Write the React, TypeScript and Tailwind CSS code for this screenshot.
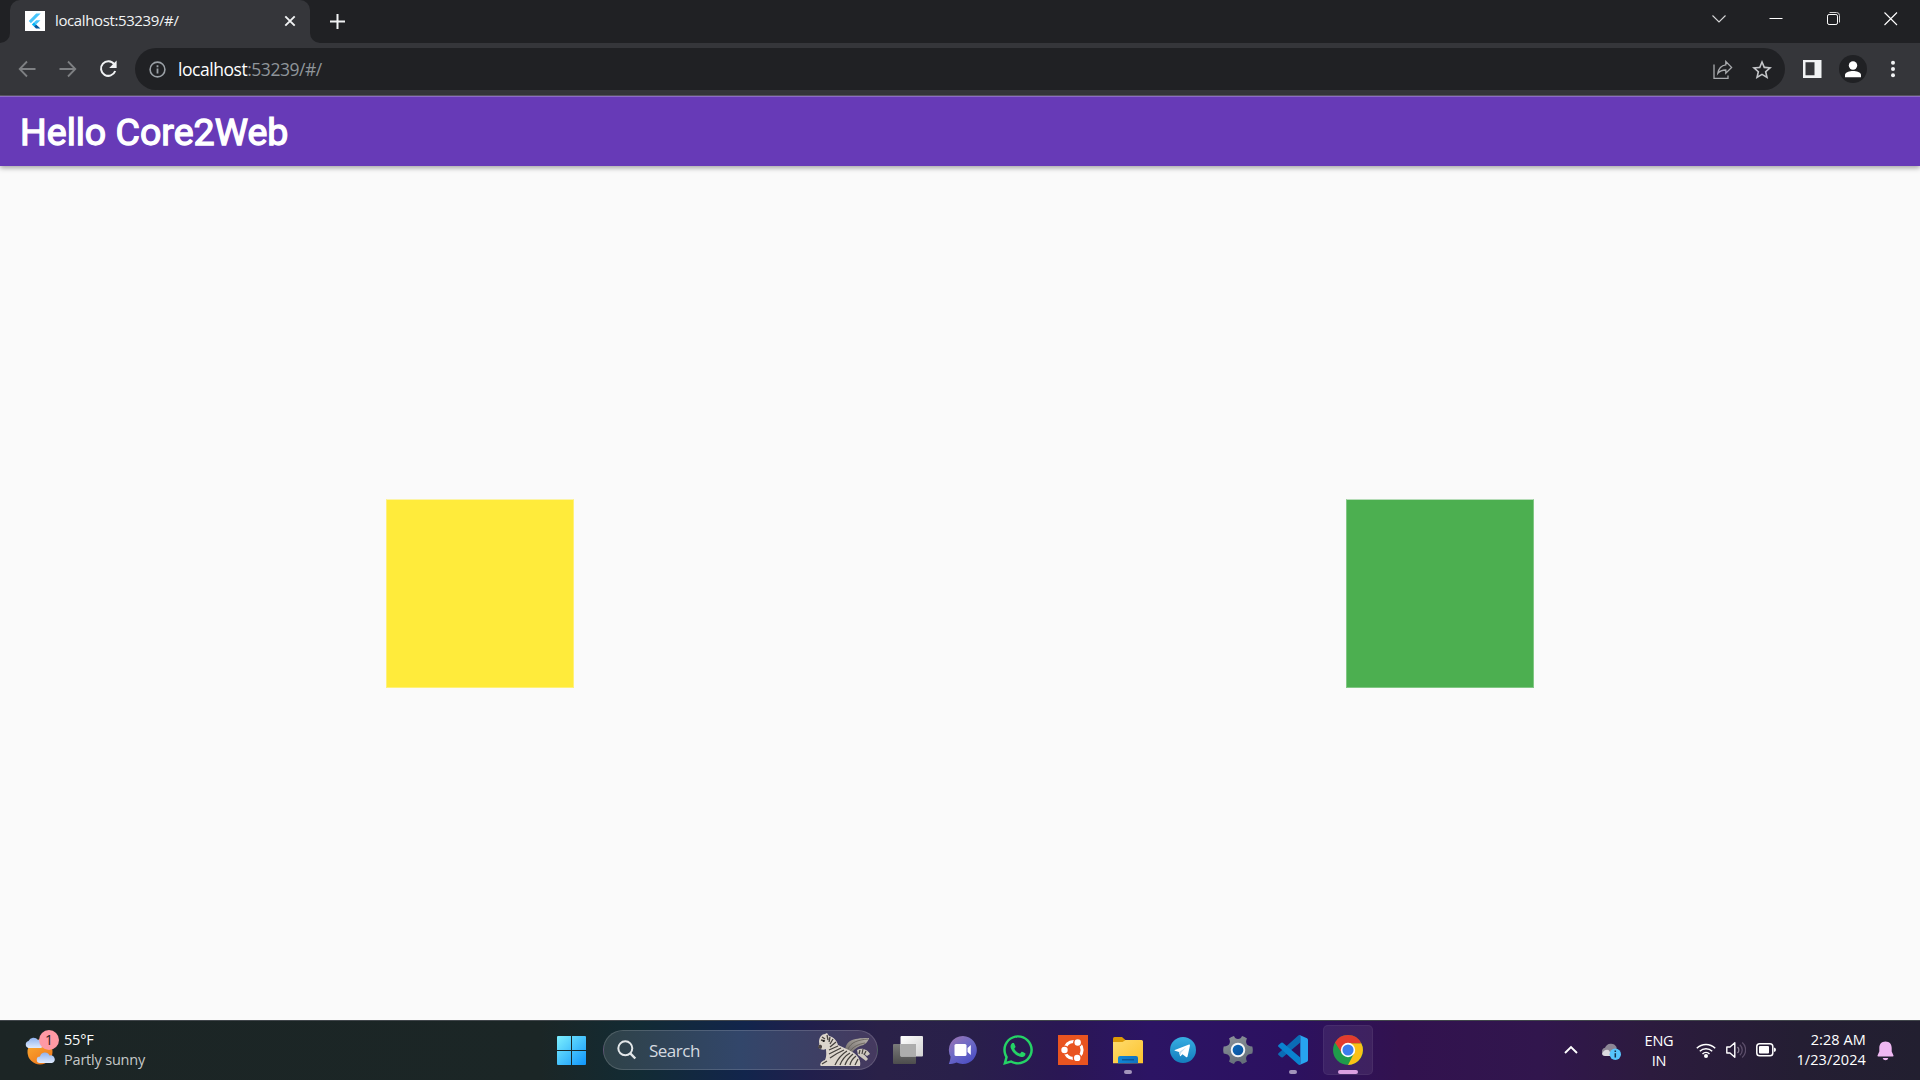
import React from "react";
import { FaWhatsapp } from "react-icons/fa";

const ui = "font-['Open_Sans','Noto_Sans',sans-serif]";

function Svg({ w, h, box, className = "", children }: { w: number; h: number; box?: string; className?: string; children: React.ReactNode }) {
  return (
    <svg width={w} height={h} viewBox={box ?? `0 0 ${w} ${h}`} fill="none" className={`shrink-0 ${className}`}>
      {children}
    </svg>
  );
}

function TabStrip() {
  return (
    <div className="flex h-[43px] items-start bg-[#202124] pl-[10px]">
      <div className="relative flex h-[43px] w-[300px] items-center rounded-t-[10px] bg-[#35363a] pl-[15px]">
        <Svg w={10} h={10} className="absolute bottom-0 -left-[10px]">
          <path d="M10 0V10H0A10 10 0 0 0 10 0Z" fill="#35363a" />
        </Svg>
        <Svg w={10} h={10} className="absolute -right-[10px] bottom-0">
          <path d="M0 0V10H10A10 10 0 0 1 0 0Z" fill="#35363a" />
        </Svg>
        <Svg w={20} h={20} className="-mt-px">
          <path d="M0 0H20V20H0Z" fill="#fff" />
          <path d="M11.2 2.5H15.6L5.9 12.2L3.8 10Z" fill="#47c5fb" />
          <path d="M11.2 9.2H15.4L11.1 13.4L9 11.3Z" fill="#47c5fb" />
          <path d="M6.8 13.4L9 11.2L11.1 13.4L9 15.6Z" fill="#00b5f8" />
          <path d="M9 15.6L11.1 13.4L15.4 17.4H11Z" fill="#00569e" />
        </Svg>
        <span className={`${ui} mb-[3px] ml-[10px] w-[229px] text-[15px] leading-5 tracking-[-0.38px] whitespace-nowrap text-[#f1f3f4]`}>localhost:53239/#/</span>
        <Svg w={12} h={12} className="mb-px">
          <path d="M1.3 1.3L10.7 10.7M10.7 1.3L1.3 10.7" stroke="#f1f3f4" strokeWidth="1.9" />
        </Svg>
      </div>
      <Svg w={16} h={16} className="mt-[13px] ml-[19px]">
        <path d="M8.5 1V16M1 8.5H16" stroke="#f1f3f4" strokeWidth="2" />
      </Svg>
      <div className="mt-[11px] ml-auto flex items-center pr-[21px]">
        <Svg w={16} h={16} className="mr-[41px]">
          <path d="M1.5 4.5L8 11L14.5 4.5" stroke="#d6d7d8" strokeWidth="1.1" />
        </Svg>
        <Svg w={16} h={16} className="mr-[41px]">
          <path d="M1.5 7.5H14.5" stroke="#fff" />
        </Svg>
        <Svg w={16} h={16} className="mr-[42px]">
          <rect x="2.5" y="3.5" width="10" height="10" rx="1.6" stroke="#fff" />
          <path d="M4.5 1.5H11.5Q14.5 1.5 14.5 4.5V11.5" stroke="#d0d0d0" />
        </Svg>
        <Svg w={16} h={16}>
          <path d="M1.5 1.5L14 14M14 1.5L1.5 14" stroke="#fff" strokeWidth="1.1" />
        </Svg>
      </div>
    </div>
  );
}

function Toolbar() {
  return (
    <div className="flex h-[53px] items-center border-b border-[#5d5a66] bg-[#35363a] pl-[18px]">
      <Svg w={18} h={18}>
        <path d="M17.5 9H2M9 1.5L1.7 9L9 16.5" stroke="#7e8083" strokeWidth="1.8" />
      </Svg>
      <Svg w={18} h={18} className="ml-[23px]">
        <path d="M0.5 9H16M9 1.5L16.3 9L9 16.5" stroke="#7e8083" strokeWidth="1.8" />
      </Svg>
      <Svg w={18} h={18} className="ml-[22px]">
        <path d="M15.2 4.2A7.3 7.3 0 1 0 16.2 11" stroke="#f1f3f4" strokeWidth="2" />
        <path d="M17.6 0.5V8H10.2Z" fill="#f1f3f4" />
      </Svg>
      <div className="ml-[18px] flex h-[42px] w-[1650px] items-center rounded-full bg-[#202124] pl-[14px]">
        <Svg w={17} h={17}>
          <circle cx="8.5" cy="8.5" r="7.4" stroke="#9aa0a6" strokeWidth="1.6" />
          <path d="M8.5 7.6V12.6M8.5 4.3V6.2" stroke="#9aa0a6" strokeWidth="1.8" />
        </Svg>
        <span className={`${ui} ml-[12px] text-[17.5px] leading-6 tracking-[-0.46px] whitespace-nowrap text-[#8f959a]`}>
          <span className="text-white">localhost</span>:53239/#/
        </span>
        <Svg w={20} h={20} className="mt-px ml-auto">
          <path d="M1 4.5V18.4H15V15.5" stroke="#a9abae" strokeWidth="1.3" />
          <path d="M12.8 1.5L18.6 7.4L12.8 13.2V10C9 10 6.6 11.2 4.8 13.4C5.4 9.4 7.8 5.4 12.8 4.8Z" stroke="#a9abae" strokeWidth="1.3" />
        </Svg>
        <Svg w={20} h={20} box="2 2 20 20" className="mt-px mr-[13px] ml-[19px]">
          <path d="M22 9.24l-7.19-.62L12 2 9.19 8.63 2 9.24l5.46 4.73L5.82 21 12 17.27 18.18 21l-1.63-7.03L22 9.24zM12 15.4l-3.76 2.27 1-4.28-3.32-2.88 4.38-.38L12 6.1l1.71 4.04 4.38.38-3.32 2.88 1 4.28L12 15.4z" fill="#c4c6c9" />
        </Svg>
      </div>
      <Svg w={19} h={18} className="ml-[18px]">
        <path fillRule="evenodd" d="M0 0H18.5V18H0ZM2.5 2.3V15.2H11.5V2.3Z" fill="#f1f3f4" />
      </Svg>
      <div className="ml-[17px] flex size-7 items-center justify-center rounded-full bg-[#202124]">
        <Svg w={16} h={17}>
          <circle cx="8" cy="4.5" r="4.2" fill="#fff" />
          <path d="M0 16.3V14C0 11.2 4.6 10 8 10S16 11.2 16 14V16.3Z" fill="#fff" />
        </Svg>
      </div>
      <Svg w={6} h={18} className="ml-[22.5px]">
        <circle cx="3" cy="2.7" r="2" fill="#f1f3f4" />
        <circle cx="3" cy="9" r="2" fill="#f1f3f4" />
        <circle cx="3" cy="15.3" r="2" fill="#f1f3f4" />
      </Svg>
    </div>
  );
}

function Page() {
  return (
    <main className="flex flex-1 flex-col bg-[#fafafa]">
      <header className="z-10 flex h-[70px] items-center border-t border-[#8c6cc4] bg-[#673ab7] pl-5 shadow-[0_2px_5px_rgba(0,0,0,0.35)]">
        <h1 className="pt-[2px] font-['Roboto',sans-serif] text-[37.5px] leading-none font-normal whitespace-nowrap text-white [-webkit-text-stroke:1.3px_white]">Hello Core2Web</h1>
      </header>
      <section className="grid flex-1 grid-cols-2 place-items-center pt-px">
        <div className="h-[189px] w-[188px] border border-[#fff17a] border-t-[#fcf4a6] bg-[#ffeb3b]" />
        <div className="h-[189px] w-[188px] border border-[#81c784] border-t-[#b5dcb7] bg-[#4caf50]" />
      </section>
    </main>
  );
}

function Weather() {
  return (
    <div className="flex w-[557px] items-center pl-[24px]">
      <div className="relative mb-[3px] h-[36px] w-[36px]">
        <Svg w={36} h={36}>
          <defs>
            <linearGradient id="sun" x1="0" y1="0" x2="0.6" y2="1">
              <stop stopColor="#fbb034" />
              <stop offset="1" stopColor="#f07a1c" />
            </linearGradient>
            <linearGradient id="cloud" x1="0" y1="0" x2="0" y2="1">
              <stop stopColor="#8fb2ee" />
              <stop offset="1" stopColor="#dfeafd" />
            </linearGradient>
          </defs>
          <circle cx="16" cy="21" r="12.5" fill="url(#sun)" />
          <path d="M4.5 17A3.6 3.6 0 0 1 4.5 10A5.5 5.5 0 0 1 14 9A4.2 4.2 0 0 1 17 17Z" fill="url(#cloud)" />
          <path d="M16 32A3.2 3.2 0 0 1 16 25.5A5 5 0 0 1 25.5 24.5A3.8 3.8 0 0 1 28 32Z" fill="url(#cloud)" />
        </Svg>
        <span className={`${ui} absolute -top-px left-[15px] flex size-[20px] items-center justify-center rounded-full bg-[#ff99a4] text-[14px] leading-none text-[#2b1a1c]`}>1</span>
      </div>
      <div className={`${ui} ml-[4px] text-[14.5px] leading-[20px] whitespace-nowrap`}>
        <div className="tracking-[-0.2px] text-white">55°F</div>
        <div className="tracking-[-0.2px] text-[#c6c9c9]">Partly sunny</div>
      </div>
    </div>
  );
}

function Zebra() {
  return (
    <Svg w={56} h={34}>
      <defs>
        <linearGradient id="wing" x1="0" y1="1" x2="1" y2="0">
          <stop stopColor="#6f6a69" />
          <stop offset="1" stopColor="#b9b3ab" />
        </linearGradient>
      </defs>
      <path d="M28 18C29 8 34 5 52 5C51 9 48 12 43 13C39 15 36 17 35 20Z" fill="url(#wing)" />
      <path d="M31 16C34 9 41 7 51 6M33 18C37 13 42 11 48 10" stroke="#5f5a56" strokeWidth="0.8" />
      <path d="M40 17C45 14 51 17 53 21L50 23L46 20L51 26L49 28L41 22Z" fill="#cfc8bf" />
      <path d="M43 17L42 21M46 16L45 21M49 18L47 22" stroke="#46423f" strokeWidth="1.2" />
      <path d="M2 9C2 4 5 1 8 1L10 0L12 3C17 4 20 8 21 12C26 14 32 17 37 20C42 24 44 28 43 33H4C2 32 4 28 8 27C10 23 9 19 9 16C7 17 4 17 2 15C1 13 3 11 2 9Z" fill="#dcd5cc" />
      <path d="M2 12C5 11 6 14 4 16L1 15Z" fill="#4c4441" />
      <path d="M5 4L8 6M4 7L8 8M10 2L11 7M13 4L12 9M16 6L13 11M19 9L13 14M21 13L12 17M24 15L12 21M27 17Q20 20 13 25M10 28L5 31M30 18Q22 23 18 32M33 20Q26 24 23 32M36 21Q30 26 28 32M39 23Q34 27 33 32M41 26L38 32" stroke="#46423f" strokeWidth="1.3" />
      <circle cx="6.5" cy="8" r="0.9" fill="#1c1a19" />
    </Svg>
  );
}

function SearchBox() {
  return (
    <div className="ml-[17px] flex h-10 w-[275px] items-center rounded-full border border-white/15 bg-linear-to-r from-[#2f4248] via-[#32466a] to-[#45395f] pl-[13px]">
      <Svg w={20} h={20}>
        <circle cx="8.3" cy="8.3" r="7" stroke="#e3e7e9" strokeWidth="2" />
        <path d="M13.3 13.3L18.3 18.5" stroke="#e3e7e9" strokeWidth="2.4" />
      </Svg>
      <span className={`${ui} mt-[2px] ml-[12px] text-[17px] leading-6 tracking-[-0.5px] text-[#d5dae0]`}>Search</span>
      <div className="mr-[4px] ml-auto">
        <Zebra />
      </div>
    </div>
  );
}

function TaskSlot({ children, mark, active }: { children: React.ReactNode; mark?: boolean; active?: boolean }) {
  return (
    <div className={`relative flex h-[50px] w-[50px] shrink-0 items-center justify-center rounded-[5px] ${active ? "border border-white/5 bg-white/7" : ""}`}>
      {children}
      {mark && <span className="absolute bottom-px left-[21px] h-1 w-2 rounded-full bg-[#a394bb]" />}
      {active && <span className="absolute bottom-0 left-[14px] h-1 w-5 rounded-full bg-[#dc9fe2]" />}
    </div>
  );
}

function Apps() {
  return (
    <div className="ml-[5px] flex items-center gap-[5px]">
      <TaskSlot>
        <Svg w={30} h={30}>
          <defs>
            <linearGradient id="tv" x1="0" y1="0" x2="1" y2="1">
              <stop stopColor="#ffffff" />
              <stop offset="1" stopColor="#d2d2d2" />
            </linearGradient>
            <linearGradient id="tvb" x1="0" y1="0" x2="0" y2="1">
              <stop stopColor="#7a7a7a" />
              <stop offset="1" stopColor="#4d4d4d" />
            </linearGradient>
          </defs>
          <rect x="0" y="9" width="23" height="20" rx="1" fill="url(#tvb)" />
          <rect x="7.5" y="1" width="22.5" height="20.5" rx="1" fill="url(#tv)" />
          <rect x="7.5" y="9" width="15.5" height="12.5" fill="#adadad" />
        </Svg>
      </TaskSlot>
      <TaskSlot>
        <Svg w={30} h={30}>
          <defs>
            <linearGradient id="chat" x1="0" y1="0" x2="0.7" y2="1">
              <stop stopColor="#a175b0" />
              <stop offset="0.5" stopColor="#6f6bc6" />
              <stop offset="1" stopColor="#4d4fc4" />
            </linearGradient>
          </defs>
          <path d="M15 1A14 14 0 1 1 8.5 27.5C6 28.6 3 29 0.8 29C2 26.5 2.3 24 2.6 21.8A14 14 0 0 1 15 1Z" fill="url(#chat)" />
          <rect x="6.5" y="9" width="12" height="12" rx="1.5" fill="#fff" />
          <path d="M19.5 13L22.8 10V20L19.5 17Z" fill="#fff" />
        </Svg>
      </TaskSlot>
      <TaskSlot>
        <FaWhatsapp size={34} color="#25d366" />
      </TaskSlot>
      <TaskSlot>
        <Svg w={30} h={30}>
          <path d="M0 0H30V30H0Z" fill="#e95420" />
          <circle cx="15.5" cy="15" r="8.6" stroke="#fff" strokeWidth="3" />
          <circle cx="6.5" cy="15" r="4.6" fill="#e95420" />
          <circle cx="19.7" cy="7.5" r="4.6" fill="#e95420" />
          <circle cx="19.2" cy="22.9" r="4.6" fill="#e95420" />
          <circle cx="6.5" cy="15" r="3.2" fill="#fff" />
          <circle cx="19.7" cy="7.5" r="3.2" fill="#fff" />
          <circle cx="19.2" cy="22.9" r="3.2" fill="#fff" />
        </Svg>
      </TaskSlot>
      <TaskSlot mark>
        <Svg w={30} h={30}>
          <defs>
            <linearGradient id="fold" x1="0" y1="0" x2="1" y2="1">
              <stop stopColor="#ffdb6e" />
              <stop offset="1" stopColor="#fcc32c" />
            </linearGradient>
            <linearGradient id="foldb" x1="0" y1="0" x2="1" y2="0">
              <stop stopColor="#0f87d6" />
              <stop offset="1" stopColor="#1272c0" />
            </linearGradient>
          </defs>
          <path d="M0 3.5Q0 2 1.5 2H9L13 5.5V9H0Z" fill="#dd9a07" />
          <path d="M0 7H9.5L12.5 5H28.5Q30 5 30 6.5V28.3H0Z" fill="url(#fold)" />
          <path d="M5 28.3V23Q5 21 7 21H23Q25 21 25 23V28.3Z" fill="url(#foldb)" />
          <path d="M9 24.8H21" stroke="#0b4f8c" strokeWidth="1.2" />
        </Svg>
      </TaskSlot>
      <TaskSlot>
        <Svg w={26} h={26}>
          <defs>
            <linearGradient id="tg" x1="0" y1="0" x2="0" y2="1">
              <stop stopColor="#37aee2" />
              <stop offset="1" stopColor="#147dbd" />
            </linearGradient>
          </defs>
          <circle cx="13" cy="13" r="13" fill="url(#tg)" />
          <path d="M4.8 12.9L19 7.5Q20.2 7.2 19.9 8.7L17.6 19.3Q17.2 20.6 16 19.9L12.5 17.3L10.7 19Q10 19.6 9.9 18.5L9 14.9L5 13.7Q4 13.3 4.8 12.9Z" fill="#fff" />
          <path d="M9 14.9L16.3 10.2L11.3 15.5L10.5 18.5Z" fill="#c4dff0" />
        </Svg>
      </TaskSlot>
      <TaskSlot>
        <Svg w={30} h={30}>
          <defs>
            <linearGradient id="gear" x1="0" y1="0" x2="0.4" y2="1">
              <stop stopColor="#8f959c" />
              <stop offset="1" stopColor="#66707a" />
            </linearGradient>
            <linearGradient id="hub" x1="0" y1="0" x2="1" y2="1">
              <stop stopColor="#0f6cbd" />
              <stop offset="1" stopColor="#0a4f9a" />
            </linearGradient>
          </defs>
          <path
            d="M6 3.5Q8.3 1.7 11 1Q12 4 15 4T19 1Q21.7 1.7 24 3.5Q22.5 6 23.5 8.5T29.3 11.5Q30.3 15 29.3 18.5Q24.5 19 23.5 21.5T24 26.5Q21.7 28.3 19 29Q18 26 15 26T11 29Q8.3 28.3 6 26.5Q7.5 24 6.5 21.5T0.7 18.5Q-0.3 15 0.7 11.5Q5.5 11 6.5 8.5T6 3.5Z"
            fill="url(#gear)"
          />
          <circle cx="15" cy="15" r="6.3" fill="url(#hub)" stroke="#f3f5f7" strokeWidth="1.9" />
        </Svg>
      </TaskSlot>
      <TaskSlot mark>
        <Svg w={30} h={30}>
          <path d="M22 7.8L4.8 22.2Q3.8 22.9 2.9 22.1L0.5 20Q-0.4 19.1 0.5 18.2L20.3 0.5Q21.2 -0.1 22 0.2Z" fill="#0b6cb5" />
          <path d="M22 22.2L4.8 7.8Q3.8 7.1 2.9 7.9L0.5 10Q-0.4 10.9 0.5 11.8L20.3 29.5Q21.2 30.1 22 29.8Z" fill="#0a82cf" />
          <path d="M21.5 0L29 3.3Q30 3.8 30 5V25Q30 26.2 29 26.7L21.5 30Q22.3 29.5 22.3 28V2Q22.3 0.6 21.5 0Z" fill="#27a4f0" />
        </Svg>
      </TaskSlot>
      <TaskSlot active>
        <Svg w={30} h={30} box="0 0 48 48">
          <circle cx="24" cy="24" r="24" fill="#1f9b4b" />
          <path d="M24 13H45.2A24 24 0 0 1 24 48L33.5 29.5Z" fill="#fbc116" />
          <path d="M24 13L14.5 29.5L3.2 12A24 24 0 0 1 45.2 13Z" fill="#e33b2e" />
          <circle cx="24" cy="24" r="11.5" fill="#fff" />
          <circle cx="24" cy="24" r="8.9" fill="#3b7ded" />
        </Svg>
      </TaskSlot>
    </div>
  );
}

function Tray() {
  return (
    <div className={`${ui} ml-auto flex items-center pr-[26px] text-[14.5px] leading-[20px] text-white`}>
      <Svg w={14} h={10} className="mr-[23px]">
        <path d="M1 8L7 2L13 8" stroke="#fff" strokeWidth="1.9" />
      </Svg>
      <Svg w={20} h={18} className="mt-[2px]">
        <path d="M4.5 14A4.2 4.2 0 0 1 4 5.8A6.3 6.3 0 0 1 15.5 5L16 14Z" fill="#8c8694" />
        <path d="M1 12Q3 7 7.5 8L12 14H4Q1.5 14 1 12Z" fill="#dcdadf" />
        <circle cx="14.3" cy="12.2" r="5.7" fill="#56c5fb" />
        <path d="M14.3 11.2V15.5M14.3 8.5V10" stroke="#17324a" strokeWidth="1.5" />
      </Svg>
      <div className="mt-[2px] ml-[20px] w-[36px] text-center tracking-[-0.2px]">
        <div>ENG</div>
        <div>IN</div>
      </div>
      <Svg w={20} h={17} className="ml-[19px]">
        <path d="M0.8 6.3A13 13 0 0 1 19.2 6.3M3.8 9.3A8.7 8.7 0 0 1 16.2 9.3M6.5 12A5 5 0 0 1 13.5 12" stroke="#fff" strokeWidth="1.5" />
        <circle cx="10" cy="14" r="2" fill="#fff" />
      </Svg>
      <Svg w={20} h={18} className="ml-[10px]">
        <path d="M0.8 6H4L8.8 1.8V16.2L4 12H0.8Z" stroke="#fff" strokeWidth="1.4" strokeLinejoin="round" />
        <path d="M11.5 6A4 4 0 0 1 11.5 12" stroke="#8a7f93" strokeWidth="1.3" />
        <path d="M13.8 3.7A7 7 0 0 1 13.8 14.3M16.2 1.5A10 10 0 0 1 16.2 16.5" stroke="#5d4f6b" strokeWidth="1.3" />
      </Svg>
      <Svg w={20} h={14} className="ml-[10px]">
        <rect x="0.8" y="0.8" width="16" height="12" rx="2.8" stroke="#fff" strokeWidth="1.5" />
        <rect x="3" y="3" width="10" height="7.6" rx="1" fill="#fff" />
        <path d="M18 4.5Q20 4.8 20 6.8T18 9Z" fill="#fff" />
      </Svg>
      <div className="ml-[16px] w-[74px] text-right tracking-[0.1px] whitespace-nowrap">
        <div>2:28 AM</div>
        <div>1/23/2024</div>
      </div>
      <Svg w={17} h={20} className="mt-[2px] ml-[11px]">
        <path d="M8.5 0.5C4.5 0.5 2.3 3.3 2.3 7V10.5L0.5 14.5Q0.3 15.5 1.3 15.5H15.7Q16.7 15.5 16.5 14.5L14.7 10.5V7C14.7 3.3 12.5 0.5 8.5 0.5Z" fill="#efb8f2" />
        <path d="M5.7 17H11.3Q10.7 19.3 8.5 19.3T5.7 17Z" fill="#efb8f2" />
      </Svg>
    </div>
  );
}

function Taskbar() {
  return (
    <footer className="flex h-[60px] items-center border-t border-[#41464b] bg-[linear-gradient(90deg,#1c2525_0px,#1b2626_540px,#122b34_640px,#12254c_745px,#211f4c_810px,#2a2148_880px,#29204a_960px,#2a1754_1060px,#2c1464_1150px,#2c1160_1290px,#32124f_1400px,#31164d_1540px,#2c1b3e_1650px,#241e33_1800px,#221f30_1920px)] pb-px">
      <Weather />
      <Svg w={29} h={29}>
        <defs>
          <linearGradient id="win" x1="0" y1="0" x2="29" y2="29" gradientUnits="userSpaceOnUse">
            <stop stopColor="#7df0fe" />
            <stop offset="1" stopColor="#0f95fb" />
          </linearGradient>
        </defs>
        <path d="M0 1Q0 0 1 0H14V14H0ZM15 0H28Q29 0 29 1V14H15ZM0 15H14V29H1Q0 29 0 28ZM15 15H29V28Q29 29 28 29H15Z" fill="url(#win)" />
      </Svg>
      <SearchBox />
      <Apps />
      <Tray />
    </footer>
  );
}

export default function App() {
  return (
    <div className="flex h-[1080px] w-[1920px] flex-col overflow-hidden">
      <TabStrip />
      <Toolbar />
      <Page />
      <Taskbar />
    </div>
  );
}
